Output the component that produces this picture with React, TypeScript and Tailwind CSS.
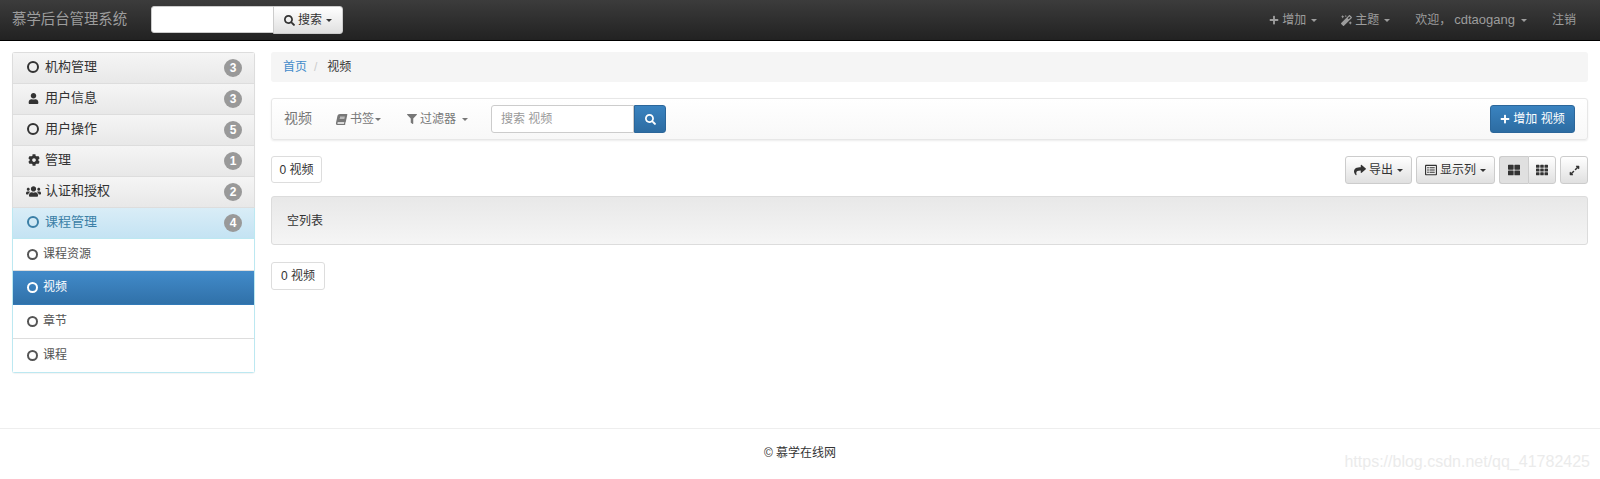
import { FaBook, FaCog, FaExpandAlt, FaFilter, FaMagic, FaPlus, FaRegListAlt, FaSearch, FaShare, FaTh, FaThLarge, FaUser, FaUsers } from 'react-icons/fa'
import type { ReactNode } from 'react'

const font = { fontFamily: '"Liberation Sans", "Noto Sans CJK SC", sans-serif' }

function Caret({ className = '' }: { className?: string }) {
  return <span className={`inline-block h-0 w-0 border-x-[3.5px] border-t-[3.5px] border-x-transparent border-t-current ${className}`} />
}

function Ring({ className = '' }: { className?: string }) {
  return <span className={`inline-block rounded-full border-2 border-current ${className}`} />
}

function GroupRow({ icon, label, count, active }: { icon: ReactNode; label: string; count: number; active?: boolean }) {
  return (
    <div className={`flex h-[31px] items-center border-b pr-[12px] pl-[14px] text-[13px] ${active ? 'border-[#bce8f1] bg-gradient-to-b from-[#d9edf7] to-[#c4e3f3] text-[#3b7fa6]' : 'border-[#dddddd] bg-gradient-to-b from-[#f5f5f5] to-[#e8e8e8] text-[#333333]'}`}>
      <span className="flex w-[18px] pb-[2px] text-[12px]">{icon}</span>
      <span className="flex-1 pb-[2px]">{label}</span>
      <span className="flex h-[18px] w-[18px] items-center justify-center rounded-full bg-[#999999] text-[12px] font-bold text-white">{count}</span>
    </div>
  )
}

function SubRow({ label, active, className = '' }: { label: string; active?: boolean; className?: string }) {
  return (
    <div className={`flex items-center border-b pl-[14px] text-[12px] last:border-b-0 ${active ? 'border-[#337ab7] bg-gradient-to-b from-[#428bca] to-[#3071a9] text-white' : 'border-[#dddddd] bg-white text-[#555555]'} ${className}`}>
      <Ring className="h-[11px] w-[11px]" />
      <span className="ml-[5px] pb-[1px]">{label}</span>
    </div>
  )
}

function Sidebar() {
  return (
    <div className="w-[243px] shrink-0 overflow-hidden rounded-[3px] shadow-[0_1px_1px_rgba(0,0,0,0.05)]">
      <div className="border-x border-t border-[#dddddd]">
        <GroupRow icon={<Ring className="h-[12px] w-[12px]" />} label="机构管理" count={3} />
        <GroupRow icon={<FaUser className="ml-[1px] text-[11px]" />} label="用户信息" count={3} />
        <GroupRow icon={<Ring className="h-[12px] w-[12px]" />} label="用户操作" count={5} />
        <GroupRow icon={<FaCog className="ml-[1px] text-[12px]" />} label="管理" count={1} />
        <GroupRow icon={<FaUsers className="-ml-px text-[15px]" />} label="认证和授权" count={2} />
      </div>
      <div className="border-x border-b border-[#bce8f1]">
        <GroupRow icon={<Ring className="h-[12px] w-[12px]" />} label="课程管理" count={4} active />
        <SubRow label="课程资源" className="h-[32px]" />
        <SubRow label="视频" active className="h-[34px]" />
        <SubRow label="章节" className="h-[34px]" />
        <SubRow label="课程" className="h-[33px]" />
      </div>
    </div>
  )
}

function ToolButton({ children, className = '' }: { children: ReactNode; className?: string }) {
  return (
    <button className={`flex h-[28px] items-center justify-center rounded-[3px] border border-[#cccccc] bg-gradient-to-b from-white to-[#e0e0e0] text-[12px] text-[#333333] ${className}`}>
      {children}
    </button>
  )
}

function CountBox({ className = '' }: { className?: string }) {
  return (
    <div className={`flex items-center justify-center rounded-[3px] border border-[#dddddd] bg-white text-[12px] text-[#333333] ${className}`}>
      0 视频
    </div>
  )
}

export default function App() {
  return (
    <div className="relative h-[479px] overflow-hidden bg-white" style={font}>
      <nav className="flex h-[41px] items-center border-b border-black bg-gradient-to-b from-[#3c3c3c] to-[#222222] pl-[12px] pr-[24px] text-[12px] text-[#9d9d9d]">
        <span className="w-[139px] text-[14.4px]">慕学后台管理系统</span>
        <div className="flex h-[28px]">
          <input className="h-[27px] w-[123px] rounded-l-[3px] border border-[#cccccc] bg-white" />
          <button className="-ml-px flex w-[70px] items-center justify-center gap-[3px] rounded-r-[3px] border border-[#cccccc] bg-gradient-to-b from-white to-[#e0e0e0] text-[12px] text-[#333333]">
            <FaSearch className="text-[11px]" />
            搜索
            <Caret className="ml-[1px]" />
          </button>
        </div>
        <div className="ml-auto flex items-center">
          <span className="flex items-center gap-[3px]"><FaPlus className="text-[10px]" />增加<Caret className="ml-[2px]" /></span>
          <span className="ml-[24px] flex items-center gap-[3px]"><FaMagic className="text-[11px]" />主题<Caret className="ml-[2px]" /></span>
          <span className="ml-[25px] flex items-center">欢迎，<span className="ml-[3px] text-[13px]">cdtaogang</span><Caret className="ml-[6px]" /></span>
          <span className="ml-[25px]">注销</span>
        </div>
      </nav>

      <div className="flex items-start gap-[16px] pl-[12px] pr-[12px] pt-[11px]">
        <Sidebar />
        <main className="min-w-0 flex-1">
          <div className="flex h-[30px] items-center rounded-[3px] bg-[#f5f5f5] px-[12px] pb-[1px] text-[12px] text-[#333333]">
            <span className="text-[#428bca]">首页</span>
            <span className="mx-[7px] text-[#cccccc]">/</span>
            <span className="ml-[3px]">视频</span>
          </div>

          <div className="mt-[16px] flex h-[42px] items-center rounded-[3px] border border-[#e7e7e7] bg-gradient-to-b from-white to-[#f8f8f8] pl-[12px] pr-[12px] text-[12px] text-[#777777] shadow-[0_1px_2px_rgba(0,0,0,0.08)]">
            <span className="w-[52px] pb-[1px] text-[14px]">视频</span>
            <FaBook className="-skew-x-12 text-[11px]" />
            <span className="ml-[3px] flex items-center">书签<Caret className="ml-[1px]" /></span>
            <FaFilter className="ml-[26px] text-[10px]" />
            <span className="ml-[3px] flex items-center gap-[6px]">过滤器<Caret /></span>
            <div className="ml-[23px] flex h-[28px] items-center">
              <div className="flex h-[28px] w-[143px] items-center rounded-l-[3px] border border-[#cccccc] bg-white pl-[9px] text-[12px] text-[#999999]">搜索 视频</div>
              <button className="flex h-[28px] w-[32px] items-center justify-center rounded-r-[3px] border border-[#2b669a] bg-gradient-to-b from-[#3a83c0] to-[#2d6ca2] text-[12px] text-white">
                <FaSearch className="text-[11px]" />
              </button>
            </div>
            <button className="ml-auto flex h-[28px] w-[85px] items-center justify-center gap-[3px] rounded-[3px] border border-[#2b669a] bg-gradient-to-b from-[#3a83c0] to-[#2d6ca2] text-[12px] text-white">
              <FaPlus className="text-[10px]" />增加 视频
            </button>
          </div>

          <div className="mt-[16px] flex items-start">
            <CountBox className="h-[27px] w-[51px]" />
            <div className="ml-auto flex items-center gap-[4px]">
              <ToolButton className="w-[67px] gap-[3px]"><FaShare className="text-[12px]" />导出<Caret className="ml-[1px]" /></ToolButton>
              <ToolButton className="w-[79px] gap-[3px]"><FaRegListAlt className="text-[12px]" />显示列<Caret className="ml-[1px]" /></ToolButton>
              <div className="flex">
                <ToolButton className="w-[29px] rounded-r-none border-r-0 !bg-none bg-[#e0e0e0]"><FaThLarge className="text-[12px]" /></ToolButton>
                <ToolButton className="w-[28px] rounded-l-none"><FaTh className="text-[12px]" /></ToolButton>
              </div>
              <ToolButton className="w-[28px]"><FaExpandAlt className="text-[11px]" /></ToolButton>
            </div>
          </div>

          <div className="mt-[12px] flex h-[49px] items-center rounded-[3px] border border-[#dcdcdc] bg-gradient-to-b from-[#e8e8e8] to-[#f5f5f5] pl-[15px] text-[12px] text-[#333333]">
            空列表
          </div>

          <CountBox className="mt-[17px] h-[28px] w-[54px]" />
        </main>
      </div>

      <footer className="mt-[55px] border-t border-[#eeeeee] pt-[15px] text-center text-[12px] text-[#333333]">
        © 慕学在线网
      </footer>
      <span className="absolute right-[10px] top-[450px] text-[16px] text-[#ebebeb]">https://blog.csdn.net/qq_41782425</span>
    </div>
  )
}
